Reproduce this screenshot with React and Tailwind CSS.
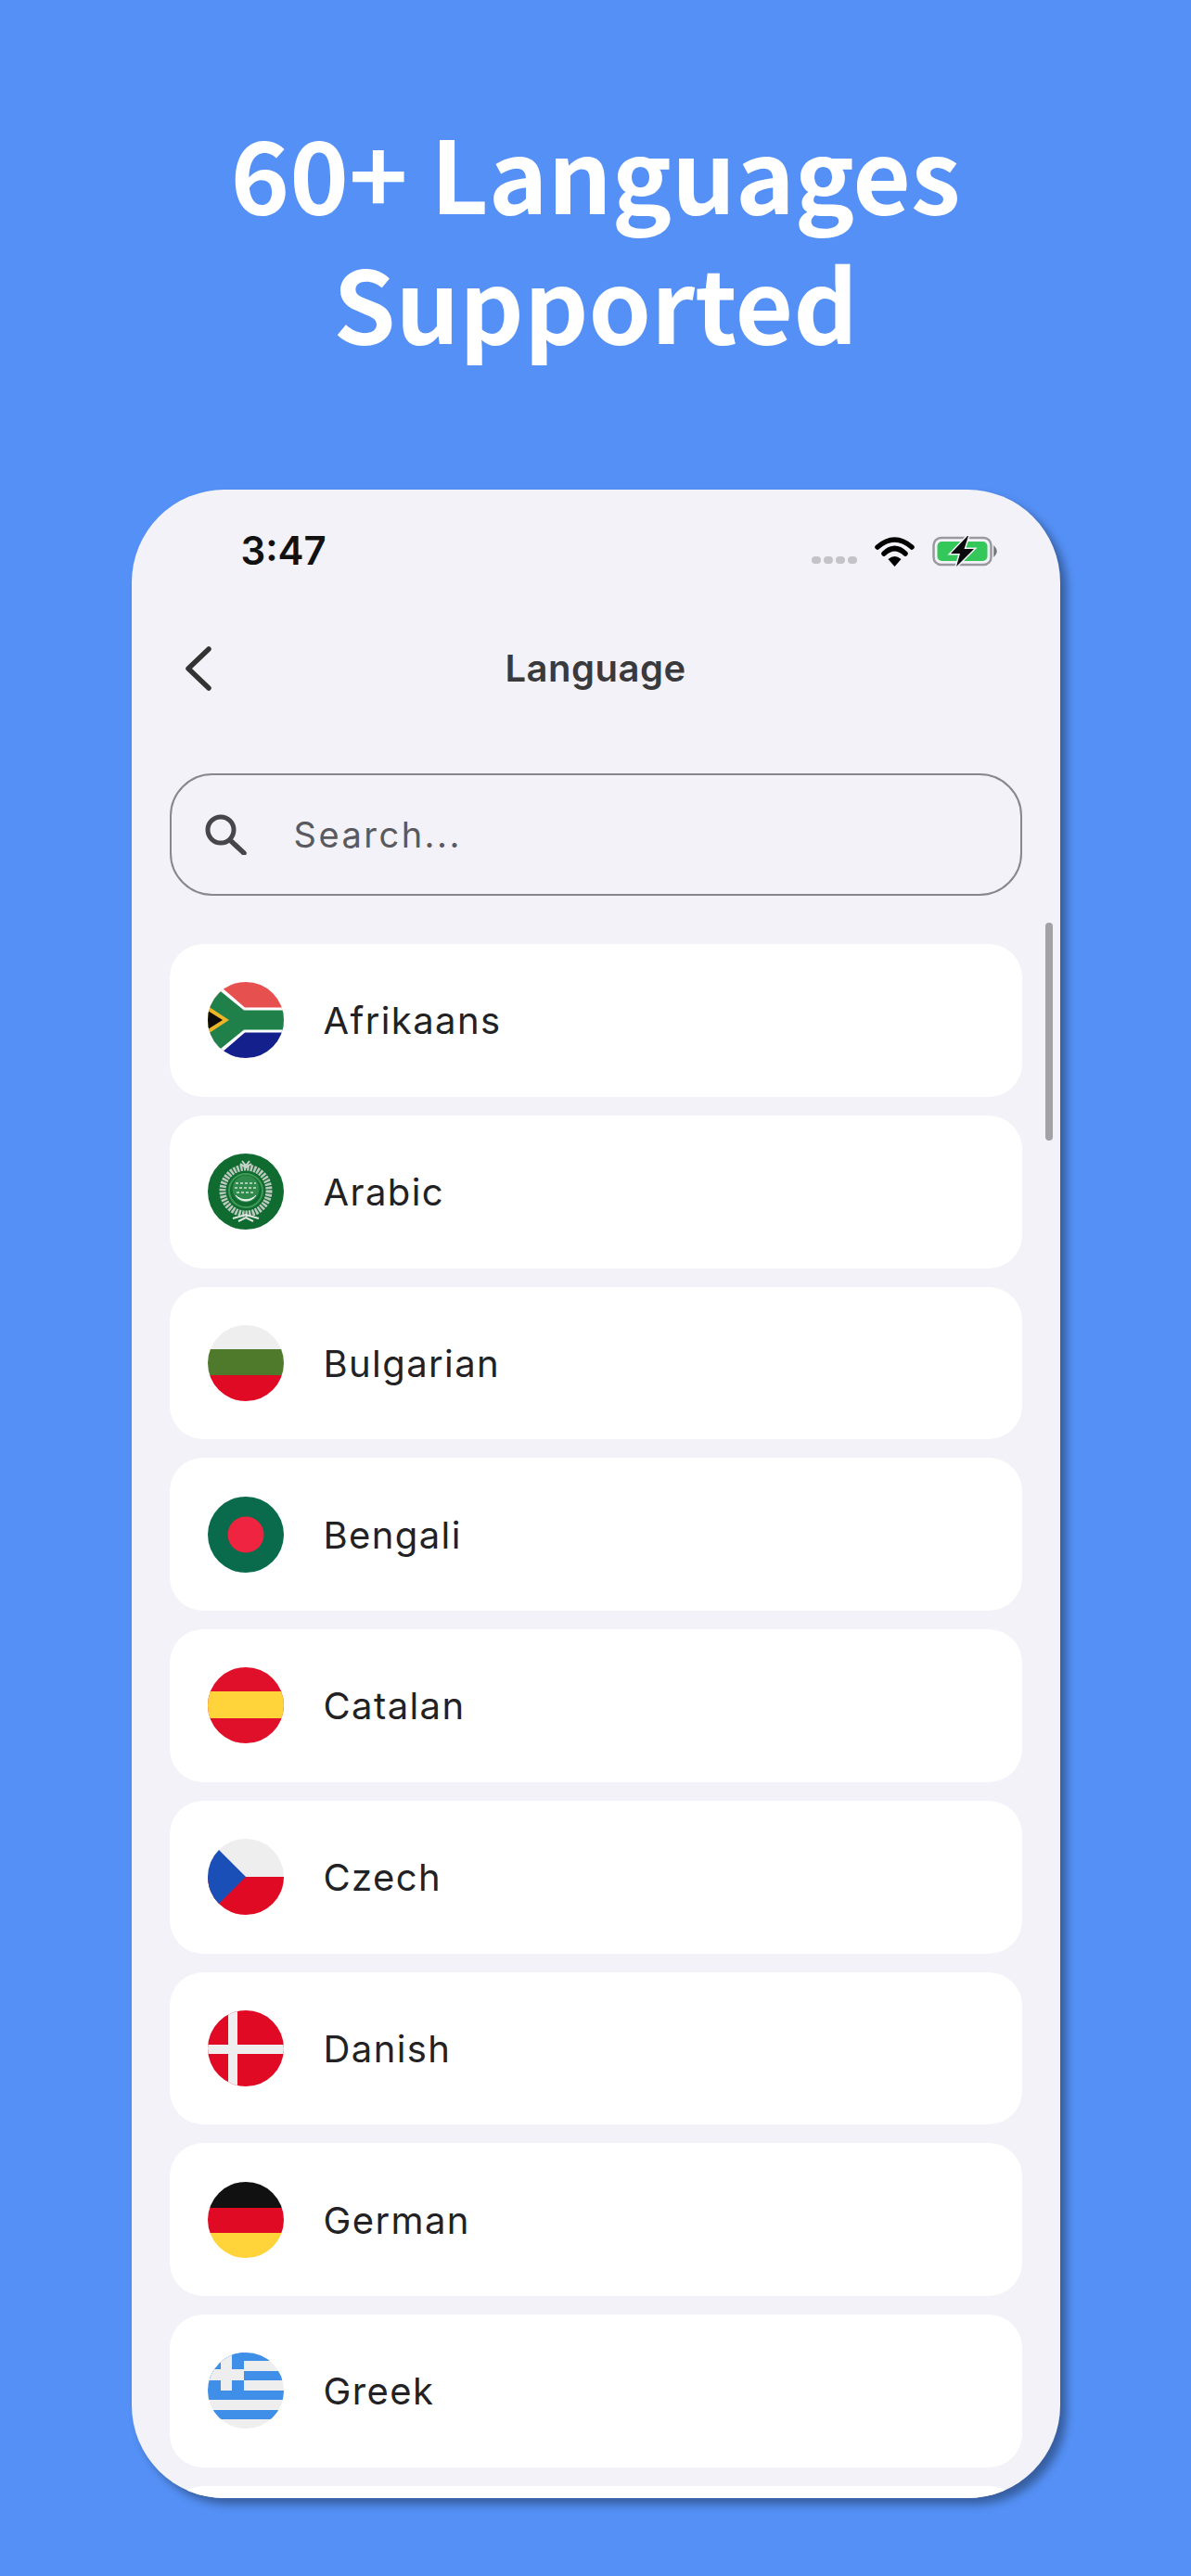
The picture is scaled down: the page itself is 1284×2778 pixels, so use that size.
const Clip = ({ children }) => (
  <svg viewBox="0 0 82 82" className="w-[82px] h-[82px] rounded-full shrink-0 block blur-[0.5px]">{children}</svg>
);

const flags = {
  Afrikaans: (
    <Clip>
      <rect width="82" height="41" fill="#e6504e" />
      <rect y="41" width="82" height="41" fill="#14208c" />
      <polygon points="15,6 40,27.5 82,27.5 82,54.5 40,54.5 15,76 0,80 0,2" fill="#fff" />
      <polygon points="12,8.5 39,30.5 82,30.5 82,51.5 39,51.5 12,73.5 0,78 0,4" fill="#1f8149" />
      <polygon points="0,26 23,41 0,56" fill="#f0b429" />
      <polygon points="0,31 16,41 0,51" fill="#0b0b0b" />
    </Clip>
  ),
  Arabic: (
    <Clip>
      <rect width="82" height="82" fill="#0f6b30" />
      <circle cx="41" cy="40" r="25" fill="none" stroke="#bcc9be" strokeWidth="7" strokeDasharray="2.5 1.2" />
      <circle cx="41" cy="40" r="18" fill="#0f6b30" stroke="#3f9a55" strokeWidth="2" />
      <circle cx="41" cy="38" r="14.5" fill="#2f8a4c" />
      <path d="M30 45 A13 13 0 0 0 52 45 A15 15 0 0 1 30 45 Z" fill="#eef5ef" stroke="#eef5ef" strokeWidth="1" />
      <path d="M30 32 L52 32 M29 37 L53 37 M31 42 L51 42" fill="none" stroke="#cfe3d4" strokeWidth="1.6" strokeDasharray="3 2" />
      <path d="M35 11 L41 15 L47 11 M37 8 L41 13 L45 8" fill="none" stroke="#c5d3c8" strokeWidth="2" />
      <path d="M27 70 L41 66 L55 70 M33 73 L41 69 L49 73" fill="none" stroke="#dfe7e1" strokeWidth="2" />
    </Clip>
  ),
  Bulgarian: (
    <Clip>
      <rect width="82" height="26" fill="#eeeeee" />
      <rect y="26" width="82" height="28" fill="#4f7a2b" />
      <rect y="54" width="82" height="28" fill="#e00a24" />
    </Clip>
  ),
  Bengali: (
    <Clip>
      <rect width="82" height="82" fill="#0a6a4c" />
      <circle cx="41" cy="41" r="19.5" fill="#ee2440" />
    </Clip>
  ),
  Catalan: (
    <Clip>
      <rect width="82" height="82" fill="#e0102a" />
      <rect y="26" width="82" height="29" fill="#ffd43b" />
    </Clip>
  ),
  Czech: (
    <Clip>
      <rect width="82" height="41" fill="#eeeeee" />
      <rect y="41" width="82" height="41" fill="#e00a24" />
      <polygon points="12,12 41,41 12,70 0,70 0,12" fill="#1b4fb8" />
    </Clip>
  ),
  Danish: (
    <Clip>
      <rect width="82" height="82" fill="#e00a24" />
      <rect x="22" width="10" height="82" fill="#eeeeee" />
      <rect y="37" width="82" height="10" fill="#eeeeee" />
    </Clip>
  ),
  German: (
    <Clip>
      <rect width="82" height="28" fill="#111111" />
      <rect y="28" width="82" height="27" fill="#e00a24" />
      <rect y="55" width="82" height="27" fill="#ffd43b" />
    </Clip>
  ),
  Greek: (
    <Clip>
      <rect width="82" height="82" fill="#eeeeee" />
      <rect width="82" height="9" fill="#3f8ee8" />
      <rect y="20" width="82" height="10" fill="#3f8ee8" />
      <rect y="41" width="82" height="10" fill="#3f8ee8" />
      <rect y="62" width="82" height="10" fill="#3f8ee8" />
      <rect width="39" height="41" fill="#3f8ee8" />
      <rect x="14" width="12" height="41" fill="#eeeeee" />
      <rect y="18" width="39" height="12" fill="#eeeeee" />
    </Clip>
  ),
};

const names = ["Afrikaans", "Arabic", "Bulgarian", "Bengali", "Catalan", "Czech", "Danish", "German", "Greek"];

export default function App() {
  return (
    <div className="w-[1284px] h-[2778px] bg-[#5490f5] overflow-hidden pt-[114px] font-['Inter',sans-serif]">
      <h1 className="text-center text-white font-bold text-[108px] leading-[140px] font-['Noto_Sans_CJK_JP',sans-serif]">
        60+ Languages
        <br />
        Supported
      </h1>
      <div className="relative mx-auto mt-[134px] w-[1001px] h-[2166px] rounded-[100px] bg-[#f2f2f8] overflow-hidden shadow-[7px_7px_10px_rgba(0,0,0,0.35)]">
        <div className="flex items-center justify-between h-[64px] mt-[34px] pl-[118px] pr-[67px]">
          <span className="text-[42px] font-semibold text-[#111] leading-none">3:47</span>
          <div className="flex items-end">
            <div className="flex gap-[3px] mr-[19px] mb-[3px]">
              <span className="w-[10px] h-[8px] rounded-full bg-[#c4c4c8]" />
              <span className="w-[10px] h-[8px] rounded-full bg-[#c4c4c8]" />
              <span className="w-[10px] h-[8px] rounded-full bg-[#c4c4c8]" />
              <span className="w-[10px] h-[8px] rounded-full bg-[#c4c4c8]" />
            </div>
            <svg viewBox="0 0 43 33" className="w-[43px] h-[33px] mr-[19px]">
              <path d="M3 12 Q21.5 -4 40 12" fill="none" stroke="#000" strokeWidth="5.5" strokeLinecap="round" />
              <path d="M10 19 Q21.5 8 33 19" fill="none" stroke="#000" strokeWidth="5.5" strokeLinecap="round" />
              <path d="M14.5 25 Q21.5 19 28.5 25 L21.5 33 Z" fill="#000" />
            </svg>
            <svg viewBox="0 0 71 33" className="w-[71px] h-[33px]">
              <rect x="1.5" y="2" width="62" height="29" rx="8" fill="none" stroke="#9a9a9e" strokeWidth="2.5" />
              <rect x="5.5" y="6" width="54" height="21" rx="5" fill="#34c759" />
              <path d="M67 12 Q71 16.5 67 21 Z" fill="#77777b" stroke="#77777b" strokeWidth="1.5" />
              <path d="M38 0 L20 19 H30 L26 33 L45 14 H34.5 L39 0 Z" fill="#0a0a0a" stroke="#f2f2f8" strokeWidth="3" paintOrder="stroke" />
            </svg>
          </div>
        </div>

        <div className="relative flex items-center justify-center h-[190px] mb-[18px]">
          <svg viewBox="0 0 29 48" className="absolute left-[57px] top-[71px] w-[29px] h-[48px]">
            <path d="M26 3 L4 24 L26 45" fill="none" stroke="#333" strokeWidth="5.5" strokeLinecap="round" strokeLinejoin="round" />
          </svg>
          <span className="text-[40px] font-semibold text-[#3a3a3c] tracking-[0.5px] leading-none">Language</span>
        </div>

        <div className="mx-[41px] h-[132px] rounded-[46px] border-[2.5px] border-[#88888c] flex items-center pl-[35px]">
          <svg viewBox="0 0 46 44" className="w-[46px] h-[44px]">
            <circle cx="18" cy="17" r="14" fill="none" stroke="#47474b" strokeWidth="5" />
            <path d="M28 28 L43 42" stroke="#47474b" strokeWidth="5.5" strokeLinecap="round" />
          </svg>
          <span className="ml-[51px] text-[38px] text-[#5a5a5e] tracking-[2.5px] leading-none">Search...</span>
        </div>

        <div className="flex flex-col gap-[20px] mt-[52px] mx-[41px]">
          {names.map((n) => (
            <div key={n} className="h-[164.75px] shrink-0 rounded-[36px] bg-white flex items-center pl-[41px]">
              {flags[n]}
              <span className="ml-[43px] pt-[2px] text-[40px] text-[#222224] tracking-[1.4px] leading-none">{n}</span>
            </div>
          ))}
          <div className="h-[165px] shrink-0 rounded-[36px] bg-white" />
        </div>

        <div className="absolute left-[985px] top-[467px] w-[8px] h-[235px] rounded-full bg-[#a2a2a6]" />
      </div>
    </div>
  );
}
